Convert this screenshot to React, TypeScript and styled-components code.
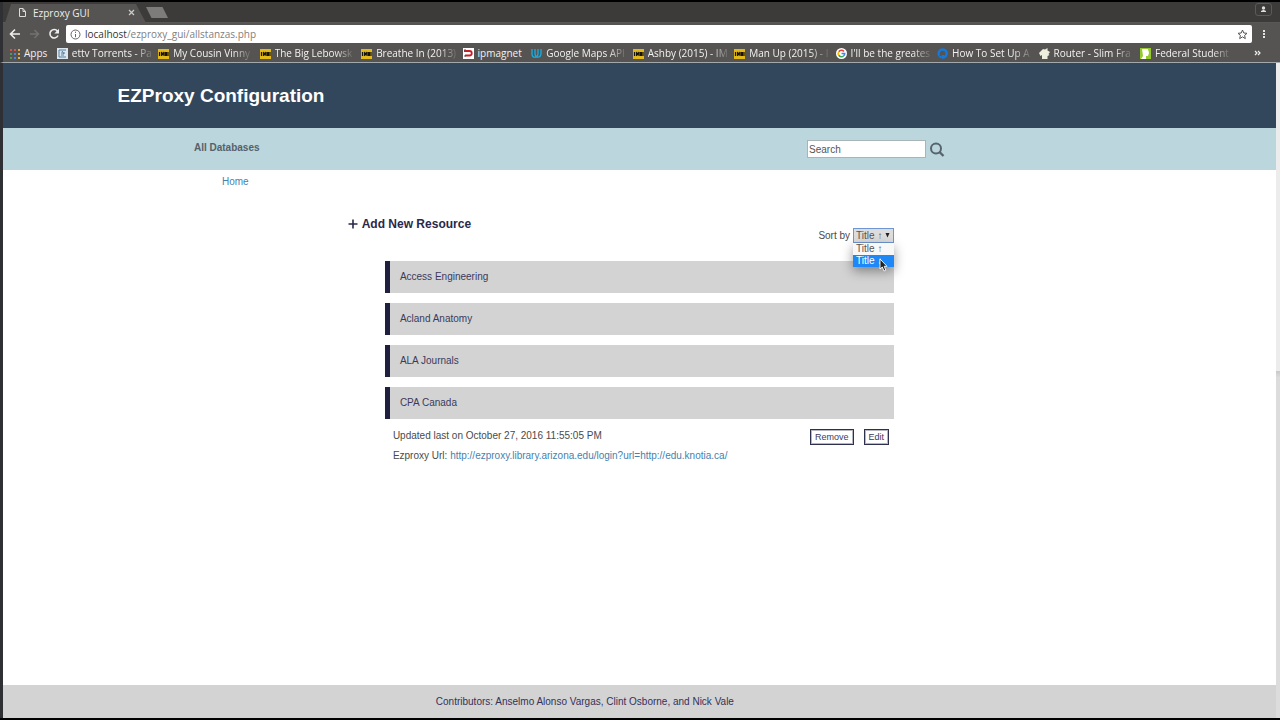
import React from "react";
import styled, { createGlobalStyle, css } from "styled-components";

const ui = '"Open Sans", "Noto Sans", sans-serif';
const sans = '"Liberation Sans", Arial, sans-serif';

const GlobalStyle = createGlobalStyle`
  *, *::before, *::after { box-sizing: border-box; }
  body { margin: 0; background: #fff; font-family: ${sans}; font-size: 10px; color: #4a4a4a; }
`;

const Frame = styled.div`
  display: flex;
  flex-direction: column;
  min-height: 100vh;
  border-top: 2px solid #000;
  border-bottom: 2px solid #000;
`;

const Chrome = styled.header`
  font-family: ${ui};
  color: #eee;
  background: #555452;
  border-left: 3px solid #2e3034;
  border-bottom: 1px solid #a2a9ad;
`;

const TabStrip = styled.div`
  display: flex;
  align-items: flex-start;
  height: 21px;
  background: #3c3b3a;
  border-bottom: 1px solid #595857;
`;

const Tab = styled.div`
  display: flex;
  align-items: center;
  gap: 6px;
  width: 143px;
  height: 21px;
  padding: 0 11px 0 15px;
  background: #555452;
  clip-path: polygon(2px 100%, 8px 2px, 133px 2px, 100% 100%);
  font-size: 10px;
  line-height: 20px;
`;

const TabTitle = styled.span`
  flex: 1;
  white-space: nowrap;
  font-weight: 500;
`;

const IconButton = styled.button`
  display: flex;
  align-items: center;
  justify-content: center;
  flex: none;
  padding: 0;
  border: 0;
  background: none;
  color: inherit;
`;

const NewTab = styled(IconButton)`
  width: 22px;
  height: 11px;
  margin-top: 5px;
  background: #7d7c7a;
  clip-path: polygon(0 0, 75% 0, 100% 100%, 25% 100%);
`;

const Profile = styled(IconButton)`
  width: 17px;
  height: 13px;
  margin: 1px 8px 0 auto;
  border: 1px solid #5b5a59;
  border-radius: 3px;
`;

const Toolbar = styled.div`
  display: flex;
  align-items: center;
  height: 22px;
  padding: 0 12px 0 6px;
  gap: 8px;
`;

const AddressBar = styled.div`
  display: flex;
  flex: 1;
  align-items: center;
  gap: 4px;
  height: 18px;
  margin-left: -2px;
  padding: 0 4px;
  border-radius: 2px;
  background: #fff;
  color: #777;
`;

const AddressText = styled.a`
  flex: 1;
  font-size: 10px;
  line-height: 18px;
  color: #808080;
  text-decoration: none;
  b { font-weight: 400; color: #333; }
`;

const Bookmarks = styled.nav`
  display: flex;
  justify-content: space-between;
  align-items: center;
  height: 17px;
  padding: 0 48px 0 7px;
  position: relative;
`;

const Bookmark = styled.a<{ $fixed?: boolean }>`
  display: flex;
  align-items: center;
  gap: 4px;
  flex: none;
  color: #f2f2f2;
  text-decoration: none;
  font-size: 10px;
  font-weight: 500;
  line-height: 15px;
  white-space: nowrap;
  svg { flex: none; }
  ${(p) => p.$fixed && css`
    width: 92px;
    span {
      flex: none;
      mask-image: linear-gradient(to right, #000 78%, rgba(0, 0, 0, 0.15) 100%);
    }
  `}
`;

const More = styled(IconButton)`
  position: absolute;
  right: 19px;
  top: 4px;
`;

const Viewport = styled.div`
  display: flex;
  flex: 1;
`;

const Page = styled.div`
  display: flex;
  flex-direction: column;
  flex: 1;
  border-left: 3px solid #2e3034;
  background: #fff;
`;

const ScrollTrack = styled.div`
  width: 4px;
  background: linear-gradient(#ececec 47%, #c8c8c8 47%, #dcdcdc 48%);
`;

const Banner = styled.div`
  height: 65px;
  padding-left: 9%;
  background: #33475c;
`;

const Title = styled.h1`
  margin: 0;
  font-size: 19px;
  line-height: 65px;
  color: #fff;
`;

const NavBar = styled.div`
  display: flex;
  justify-content: space-between;
  align-items: center;
  height: 42px;
  padding: 0 26% 0 15%;
  background: #bbd6dc;
`;

const NavLink = styled.a`
  padding-bottom: 3px;
  font-weight: 700;
  line-height: 14px;
  color: #56616b;
  text-decoration: none;
`;

const SearchForm = styled.form`
  display: flex;
  align-items: center;
  gap: 4px;
  color: #56646e;
`;

const SearchInput = styled.input`
  width: 119px;
  height: 18px;
  padding: 0 1px;
  border: 1px solid #a9b4b8;
  background: #fff;
  font: 10px ${sans};
  color: #555;
  &::placeholder { color: #555; opacity: 1; }
`;

const Main = styled.main`
  flex: 1;
`;

const Link = styled.a`
  color: #487fae;
  text-decoration: none;
`;

const Crumbs = styled.nav`
  padding: 5px 0 0 219px;
  line-height: 14px;
`;

const Tools = styled.div`
  display: flex;
  justify-content: space-between;
  width: 43%;
  margin-left: 27%;
  padding-top: 26px;
  height: 72px;
`;

const AddLink = styled.a`
  display: flex;
  gap: 4px;
  align-items: center;
  height: 18px;
  padding-left: 1px;
  font-size: 12px;
  font-weight: 700;
  color: #29284a;
  text-decoration: none;
`;

const Sort = styled.div`
  display: flex;
  align-items: center;
  gap: 3px;
  height: 15px;
  margin-top: 13px;
`;

const Picker = styled.div`
  position: relative;
  svg { position: absolute; right: 4px; top: 5px; }
`;

const Select = styled.select`
  display: block;
  appearance: none;
  width: 41px;
  height: 15px;
  padding: 0 2px;
  border: 1px solid #6f96d2;
  border-radius: 0;
  outline: none;
  background: #dddddd;
  font: 10px ${sans};
  color: #555;
`;

const Menu = styled.ul`
  position: absolute;
  z-index: 1;
  top: 100%;
  left: 0;
  width: 41px;
  margin: 0;
  padding: 0;
  list-style: none;
  background: #f8f8f8;
  box-shadow: 0 4px 12px rgba(0, 0, 0, 0.4);
`;

const MenuItem = styled.li<{ $active?: boolean }>`
  height: 12px;
  padding-left: 3px;
  line-height: 12px;
  color: ${(p) => (p.$active ? "#fff" : "#555")};
  background: ${(p) => (p.$active ? "#1e88f7" : "transparent")};
`;

const Cursor = styled.span`
  position: absolute;
  z-index: 2;
  left: 26px;
  top: 30px;
  svg { position: static; display: block; }
`;

const List = styled.div`
  display: flex;
  flex-direction: column;
  gap: 10px;
  width: 40%;
  margin-left: 30%;
`;

const Row = styled.button`
  height: 32px;
  padding: 0 10px 1px;
  border: 0;
  border-left: 5px solid #1f1f40;
  background: #d3d3d3;
  font: 10px ${sans};
  text-align: left;
  color: #3c3a5c;
`;

const Details = styled.div`
  display: flex;
  justify-content: space-between;
  padding: 0 5px 0 8px;
  line-height: 20px;
  margin-top: -3px;
  p { margin: 0; }
`;

const Actions = styled.div`
  display: flex;
  gap: 10px;
  padding-top: 3px;
`;

const Action = styled.button`
  height: 16px;
  padding: 0 4px;
  border: 1px solid #2e3050;
  outline: 1px solid #b5b6c0;
  outline-offset: -2px;
  background: #fff;
  font: 9px ${sans};
  color: #3c3a5c;
`;

const Footer = styled.footer`
  height: 33px;
  padding-left: 34%;
  background: #d3d3d3;
  line-height: 33px;
  color: #33315a;
`;

type IconName = "ettv" | "imdb" | "magnet" | "udacity" | "google" | "ocean" | "router" | "federal";

const icons: Record<IconName, React.ReactNode> = {
  ettv: (
    <>
      <rect width="11" height="11" fill="#dce8ef" />
      <path d="M2 2h7M2 2v7h7M4 5h4M4 7h3M5 3l2 3" fill="none" stroke="#557c9d" />
    </>
  ),
  imdb: (
    <>
      <rect y="1" width="11" height="10" fill="#e2b919" />
      <path d="M1.500 4v4M3.500 8V4l1.200 2.500L6 4v4M7.500 4.500v3h1v-3zM10 4v4" fill="none" stroke="#17140a" strokeWidth="1.200" />
    </>
  ),
  magnet: (
    <>
      <rect width="11" height="11" fill="#fff" />
      <path d="M1 3h5.500a2 2 0 0 1 0 4.500H2" fill="none" stroke="#c71f28" strokeWidth="1.800" />
      <path d="M2 1v2M2 7v2" stroke="#555" />
    </>
  ),
  udacity: (
    <path d="M1 1v4.500c0 2.500 1.300 3.800 3 3.800M4 1v4c0 5.500 6 5.500 6 0V1M7 1v4c0 2.500-1.200 4-3 4.300" fill="none" stroke="#19a9db" strokeWidth="1.400" />
  ),
  google: (
    <>
      <circle cx="5.500" cy="5.500" r="5.500" fill="#fff" />
      <g fill="none" strokeWidth="1.600">
        <path d="M2.800 3.700A3.200 3.200 0 0 1 7.900 3.400" stroke="#e94335" />
        <path d="M2.800 3.700a3.200 3.200 0 0 0 0 3.600" stroke="#fbbc05" />
        <path d="M2.800 7.300a3.200 3.200 0 0 0 4.700.7" stroke="#34a853" />
        <path d="M5.500 5.500h3.200a3.200 3.200 0 0 1-1.200 2.500" stroke="#4285f4" />
      </g>
    </>
  ),
  ocean: (
    <>
      <path d="M2 7.200A4 4 0 1 1 5.800 9.500V7" fill="none" stroke="#1479dd" strokeWidth="2.400" />
      <path d="M2.500 8h2v2h-2zM1 7h1.500v1.500H1z" fill="#1479dd" />
    </>
  ),
  router: (
    <path d="M0 5l4-4 2 .500L8.500 0v2.500L11 4 9.500 6l1 1-2 1v3H3V7L1.500 8z" fill="#eeeede" />
  ),
  federal: (
    <>
      <rect width="11" height="11" fill="#95c92d" />
      <path d="M2 1h6l1 4-1 3H6v3H1l2-3z" fill="#fff" />
    </>
  ),
};

const Favicon = ({ name }: { name: IconName }) => (
  <svg width="11" height="11" viewBox="0 0 11 11" aria-hidden="true">{icons[name]}</svg>
);

const AppsIcon = () => {
  const colors = ["#d9534a", "#d9534a", "#dfa63c", "#4c9d5d", "#4a87d6", "#dfa63c", "#4c9d5d", "#4a87d6", "#d9b54a"];
  return (
    <svg width="10" height="10" viewBox="0 0 10 10" aria-hidden="true">
      {colors.map((c, i) => (
        <rect key={i} x={(i % 3) * 4} y={Math.floor(i / 3) * 4} width="2" height="2" fill={c} />
      ))}
    </svg>
  );
};

const bookmarks: { icon: IconName; label: string; short?: boolean }[] = [
  { icon: "ettv", label: "ettv Torrents - Pa" },
  { icon: "imdb", label: "My Cousin Vinny" },
  { icon: "imdb", label: "The Big Lebowsk" },
  { icon: "imdb", label: "Breathe In (2013)" },
  { icon: "magnet", label: "ipmagnet", short: true },
  { icon: "udacity", label: "Google Maps API" },
  { icon: "imdb", label: "Ashby (2015) - IM" },
  { icon: "imdb", label: "Man Up (2015) - I" },
  { icon: "google", label: "I'll be the greates" },
  { icon: "ocean", label: "How To Set Up A" },
  { icon: "router", label: "Router - Slim Fra" },
  { icon: "federal", label: "Federal Student" },
];

const resources = ["Access Engineering", "Acland Anatomy", "ALA Journals", "CPA Canada"];

export default function App() {
  return (
    <>
      <GlobalStyle />
      <Frame>
        <Chrome>
          <TabStrip>
            <Tab>
              <svg width="9" height="11" viewBox="0 0 9 11" fill="none" stroke="#ddd" aria-hidden="true">
                <path d="M1.500 1.500h3.500l2.500 3v5h-6zM5 1.500v3h2.500" />
              </svg>
              <TabTitle>Ezproxy GUI</TabTitle>
              <IconButton aria-label="Close tab">
                <svg width="7" height="7" viewBox="0 0 7 7" stroke="#ccc" strokeWidth="1.200"><path d="M1 1l5 5M6 1L1 6" /></svg>
              </IconButton>
            </Tab>
            <NewTab aria-label="New tab" />
            <Profile aria-label="Profile">
              <svg width="7" height="7" viewBox="0 0 7 7" fill="#ddd"><circle cx="3.500" cy="2" r="1.700" /><path d="M1 6V5l2-1h1l2 1v1z" /></svg>
            </Profile>
          </TabStrip>
          <Toolbar>
            <IconButton aria-label="Back">
              <svg width="12" height="12" viewBox="0 0 12 12" fill="none" stroke="#eee" strokeWidth="1.600"><path d="M11 6H2M6 1.500L1.500 6 6 10.500" /></svg>
            </IconButton>
            <IconButton aria-label="Forward" disabled>
              <svg width="11" height="12" viewBox="0 0 11 12" fill="none" stroke="#737270" strokeWidth="1.500"><path d="M1 6h8M5.500 2l4 4-4 4" /></svg>
            </IconButton>
            <IconButton aria-label="Reload">
              <svg width="12" height="12" viewBox="0 0 12 12"><path d="M9.500 3.200A4.200 4.200 0 1 0 10 7.500" fill="none" stroke="#eee" strokeWidth="1.600" /><path d="M11 .800V5.500H6.300z" fill="#eee" /></svg>
            </IconButton>
            <AddressBar>
              <svg width="11" height="11" viewBox="0 0 11 11" fill="none" stroke="#666" aria-hidden="true">
                <circle cx="5.500" cy="5.500" r="4.500" /><path d="M5.500 5v3.200M5.500 2.700v1.200" />
              </svg>
              <AddressText href="#"><b>localhost</b>/ezproxy_gui/allstanzas.php</AddressText>
              <IconButton aria-label="Bookmark this page">
                <svg width="11" height="11" viewBox="0 0 11 11" fill="none" stroke="#555"><path d="M5.500 1l1.300 3 3.200.300-2.400 2.100.700 3.200-2.800-1.700-2.800 1.700.700-3.200L1 4.300 4.200 4z" /></svg>
              </IconButton>
            </AddressBar>
            <IconButton aria-label="Menu">
              <svg width="8" height="10" viewBox="0 0 8 10" fill="#e4e4e4"><rect x="3" y="1" width="2" height="2" /><rect x="3" y="4" width="2" height="2" /><rect x="3" y="7" width="2" height="2" /></svg>
            </IconButton>
          </Toolbar>
          <Bookmarks aria-label="Bookmarks">
            <Bookmark href="#"><AppsIcon /><span>Apps</span></Bookmark>
            {bookmarks.map((b) => (
              <Bookmark href="#" key={b.label} $fixed={!b.short}>
                <Favicon name={b.icon} /><span>{b.label}</span>
              </Bookmark>
            ))}
            <More aria-label="More bookmarks">
              <svg width="7" height="8" viewBox="0 0 7 8" fill="none" stroke="#eee" strokeWidth="1.200"><path d="M1 2l2 2-2 2M4 2l2 2-2 2" /></svg>
            </More>
          </Bookmarks>
        </Chrome>
        <Viewport>
          <Page>
            <Banner><Title>EZProxy Configuration</Title></Banner>
            <NavBar>
              <NavLink href="#">All Databases</NavLink>
              <SearchForm role="search">
                <SearchInput aria-label="Search" placeholder="Search" />
                <IconButton type="button" aria-label="Submit search">
                  <svg width="15" height="15" viewBox="0 0 15 15" fill="none" stroke="#56646e" strokeWidth="2"><circle cx="6" cy="6.500" r="5" /><path d="M9.500 10l4 4" strokeWidth="2.400" /></svg>
                </IconButton>
              </SearchForm>
            </NavBar>
            <Main>
              <Crumbs><Link href="#">Home</Link></Crumbs>
              <Tools>
                <AddLink href="#">
                  <svg width="10" height="10" viewBox="0 0 10 10" stroke="#29284a" strokeWidth="1.600" aria-hidden="true"><path d="M5 .500v9M.500 5h9" /></svg>
                  Add New Resource
                </AddLink>
                <Sort>
                  <label htmlFor="sort">Sort by</label>
                  <Picker>
                    <Select id="sort" defaultValue="asc">
                      <option value="asc">Title ↑</option>
                      <option value="desc">Title ↓</option>
                    </Select>
                    <svg width="5" height="5" viewBox="0 0 5 5" aria-hidden="true"><path d="M.500 0h4L2.500 4.500z" fill="#222" /></svg>
                    <Menu>
                      <MenuItem>Title ↑</MenuItem>
                      <MenuItem $active>Title ↓</MenuItem>
                    </Menu>
                    <Cursor>
                      <svg width="9" height="14" viewBox="0 0 9 14" aria-hidden="true"><path d="M1 1v10l2.300-2 1.700 4 1.800-.800L5.200 8.300H8z" fill="#222" stroke="#fff" strokeWidth=".900" /></svg>
                    </Cursor>
                  </Picker>
                </Sort>
              </Tools>
              <List>
                {resources.map((name) => <Row key={name}>{name}</Row>)}
                <Details>
                  <div>
                    <p>Updated last on October 27, 2016 11:55:05 PM</p>
                    <p>Ezproxy Url: <Link href="#">http://ezproxy.library.arizona.edu/login?url=http://edu.knotia.ca/</Link></p>
                  </div>
                  <Actions><Action>Remove</Action><Action>Edit</Action></Actions>
                </Details>
              </List>
            </Main>
            <Footer>Contributors: Anselmo Alonso Vargas, Clint Osborne, and Nick Vale</Footer>
          </Page>
          <ScrollTrack />
        </Viewport>
      </Frame>
    </>
  );
}
